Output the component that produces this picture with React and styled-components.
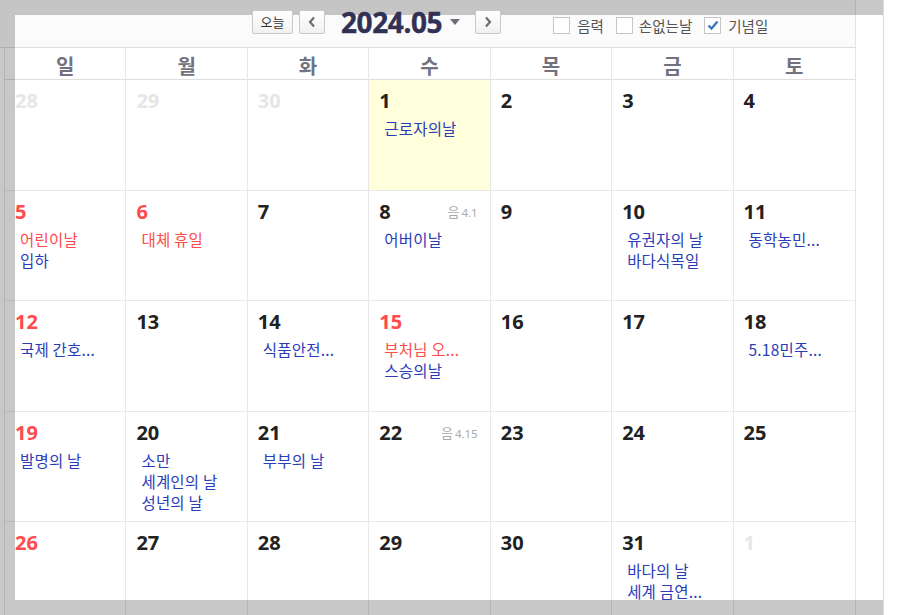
import React from 'react';
import styled, { createGlobalStyle } from 'styled-components';

const WEEKDAYS = ['일', '월', '화', '수', '목', '금', '토'];

const WEEKS = [
  [
    { day: 28, other: true },
    { day: 29, other: true },
    { day: 30, other: true },
    { day: 1, today: true, events: [{ text: '근로자의날' }] },
    { day: 2 },
    { day: 3 },
    { day: 4 },
  ],
  [
    { day: 5, red: true, events: [{ text: '어린이날', red: true }, { text: '입하' }] },
    { day: 6, red: true, events: [{ text: '대체 휴일', red: true }] },
    { day: 7 },
    { day: 8, lunar: '4.1', events: [{ text: '어버이날' }] },
    { day: 9 },
    { day: 10, events: [{ text: '유권자의 날' }, { text: '바다식목일' }] },
    { day: 11, events: [{ text: '동학농민...' }] },
  ],
  [
    { day: 12, red: true, events: [{ text: '국제 간호...' }] },
    { day: 13 },
    { day: 14, events: [{ text: '식품안전...' }] },
    { day: 15, red: true, events: [{ text: '부처님 오...', red: true }, { text: '스승의날' }] },
    { day: 16 },
    { day: 17 },
    { day: 18, events: [{ text: '5.18민주...' }] },
  ],
  [
    { day: 19, red: true, events: [{ text: '발명의 날' }] },
    { day: 20, events: [{ text: '소만' }, { text: '세계인의 날' }, { text: '성년의 날' }] },
    { day: 21, events: [{ text: '부부의 날' }] },
    { day: 22, lunar: '4.15' },
    { day: 23 },
    { day: 24 },
    { day: 25 },
  ],
  [
    { day: 26, red: true },
    { day: 27 },
    { day: 28 },
    { day: 29 },
    { day: 30 },
    { day: 31, events: [{ text: '바다의 날' }, { text: '세계 금연...' }] },
    { day: 1, other: true },
  ],
];

const GlobalStyle = createGlobalStyle`
  html, body {
    margin: 0;
    padding: 0;
    overflow: hidden;
    background: #fff;
    font-family: "Noto Sans", "Noto Sans CJK KR", sans-serif;
  }
`;

const Page = styled.div`
  position: relative;
  width: 883px;
  height: 615px;
  border-right: 1px solid #dcdcdc;
  overflow: hidden;
`;

const Calendar = styled.div`
  width: 855px;
  border-right: 1px solid #e4e4e4;
`;

const Toolbar = styled.div`
  display: flex;
  align-items: center;
  height: 48px;
  padding: 10px 0 14px 252px;
  box-sizing: border-box;
  background: #fbfbfb;
  border-bottom: 1px solid #dedede;
`;

const Control = styled.div`
  position: relative;
  z-index: 10;
  display: flex;
  align-items: center;
`;

const NavButton = styled.button`
  position: relative;
  z-index: 10;
  display: flex;
  align-items: center;
  justify-content: center;
  width: ${({ $w }) => $w}px;
  height: 24px;
  padding: 0;
  margin-right: ${({ $mr }) => $mr || 0}px;
  border: 1px solid #c9c9c9;
  border-radius: 2px;
  background: linear-gradient(#ffffff, #f1f1f1);
  font-family: "Noto Sans CJK KR", sans-serif;
  font-size: 13px;
  color: #333;
  cursor: pointer;
`;

const Title = styled.div`
  position: relative;
  z-index: 10;
  margin-left: 16px;
  font-family: "Noto Sans", sans-serif;
  font-size: 28px;
  font-weight: 700;
  letter-spacing: -0.4px;
  line-height: 24px;
  color: #313156;
  -webkit-text-stroke: 0.4px #313156;
`;

const Caret = styled.span`
  position: relative;
  z-index: 10;
  width: 0;
  height: 0;
  margin: 0 15px 0 8px;
  border-left: 5.5px solid transparent;
  border-right: 5.5px solid transparent;
  border-top: 6px solid #6f6f78;
`;

const Options = styled.div`
  display: flex;
  align-items: center;
  margin: 8px 0 0 52px;
  gap: 12px;
`;

const Box = styled.span`
  display: flex;
  align-items: center;
  justify-content: center;
  width: 15px;
  height: 15px;
  margin-right: ${({ $gap }) => $gap}px;
  border: 1px solid #c6c6c6;
  background: #fff;
`;

const Label = styled.span`
  font-family: "Noto Sans CJK KR", sans-serif;
  font-size: 14.5px;
  color: #555;
`;

const HeadRow = styled.div`
  display: grid;
  grid-template-columns: repeat(7, 1fr);
  margin-left: 4px;
  border-left: 1px solid #e4e4e4;
  border-bottom: 1px solid #dedede;
  height: 32px;
  box-sizing: border-box;
`;

const HeadCell = styled.div`
  display: flex;
  align-items: center;
  justify-content: center;
  padding-top: 3px;
  border-right: 1px solid #e8e8e8;
  font-family: "Noto Sans CJK KR", sans-serif;
  font-size: 20px;
  font-weight: 700;
  color: #72727e;
  &:last-child {
    border-right: none;
  }
`;

const Grid = styled.div`
  display: grid;
  grid-template-columns: repeat(7, 1fr);
  grid-auto-rows: 110.6px;
  margin-left: 4px;
  border-left: 1px solid #e4e4e4;
`;

const Cell = styled.div`
  box-sizing: border-box;
  padding: 7px 12px 0 10px;
  border-right: 1px solid #e8e8e8;
  border-bottom: 1px solid #e8e8e8;
  background: ${({ $today }) => ($today ? '#ffffdb' : '#fff')};
  min-width: 0;
  overflow: hidden;
  &:nth-child(7n) {
    border-right: none;
  }
`;

const DayLine = styled.div`
  display: flex;
  align-items: center;
  justify-content: space-between;
  height: 27px;
`;

const DayNum = styled.span`
  font-family: "Noto Sans", sans-serif;
  font-size: 20px;
  font-weight: 700;
  color: ${({ $tone }) => ($tone === 'red' ? '#ff4b4b' : $tone === 'other' ? '#e6e6e6' : '#222')};
`;

const Lunar = styled.span`
  font-family: "Noto Sans CJK KR", sans-serif;
  font-size: 13px;
  color: #aaa;
  b {
    font-family: "Noto Sans", sans-serif;
    font-weight: 400;
    font-size: 11.5px;
    margin-left: 2px;
  }
`;

const Events = styled.div`
  margin-top: 4px;
  padding-left: 5px;
`;

const Event = styled.div`
  font-family: "Noto Sans CJK KR", sans-serif;
  font-size: 15.5px;
  line-height: 21px;
  letter-spacing: 0.2px;
  white-space: nowrap;
  color: ${({ $red }) => ($red ? '#ff4b4b' : '#2a3cb8')};
`;

const Shade = styled.div`
  position: absolute;
  left: 15px;
  top: 15px;
  width: 870px;
  height: 585px;
  box-shadow: 0 0 0 2000px rgba(0, 0, 0, 0.216);
  pointer-events: none;
  z-index: 5;
`;

const Chevron = ({ dir }) => (
  <svg width="8" height="12" viewBox="0 0 8 12">
    <polyline
      points={dir === 'left' ? '6,1.5 2,6 6,10.5' : '2,1.5 6,6 2,10.5'}
      fill="none"
      stroke="#6c6c74"
      strokeWidth="2.2"
    />
  </svg>
);

const Check = () => (
  <svg width="12" height="11" viewBox="0 0 12 11">
    <polyline points="1.5,5.5 4.5,8.5 10.5,1.5" fill="none" stroke="#3a78c2" strokeWidth="2.4" />
  </svg>
);

const Option = ({ label, checked, gap }) => (
  <Control>
    <Box $gap={gap}>{checked && <Check />}</Box>
    <Label>{label}</Label>
  </Control>
);

const App = () => {
  return (
    <Page>
      <GlobalStyle />
      <Calendar>
        <Toolbar>
          <NavButton $w={41} $mr={6}>오늘</NavButton>
          <NavButton $w={26}><Chevron dir="left" /></NavButton>
          <Title>2024.05</Title>
          <Caret />
          <NavButton $w={26}><Chevron dir="right" /></NavButton>
          <Options>
            <Option label="음력" gap={7} />
            <Option label="손없는날" gap={6} />
            <Option label="기념일" gap={7} checked />
          </Options>
        </Toolbar>
        <HeadRow>
          {WEEKDAYS.map((d) => <HeadCell key={d}>{d}</HeadCell>)}
        </HeadRow>
        <Grid>
          {WEEKS.map((week, wi) =>
            week.map((c, ci) => (
              <Cell key={`${wi}-${ci}`} $today={c.today}>
                <DayLine>
                  <DayNum $tone={c.other ? 'other' : c.red ? 'red' : 'normal'}>{c.day}</DayNum>
                  {c.lunar && <Lunar>음<b>{c.lunar}</b></Lunar>}
                </DayLine>
                {c.events && (
                  <Events>
                    {c.events.map((e) => <Event key={e.text} $red={e.red}>{e.text}</Event>)}
                  </Events>
                )}
              </Cell>
            ))
          )}
        </Grid>
      </Calendar>
      <Shade />
    </Page>
  );
};

export default App;
